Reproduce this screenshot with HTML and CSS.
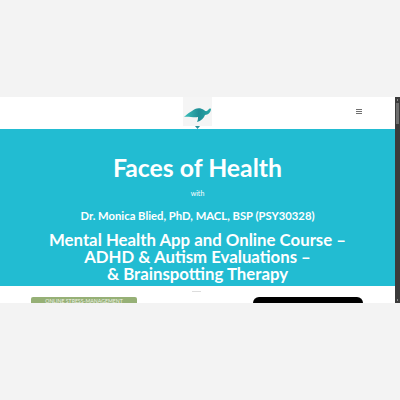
FILE: index.html
```html
<!DOCTYPE html>
<html lang="en">
  <head>
    <meta charset="UTF-8" />
    <meta name="viewport" content="width=device-width, initial-scale=1.0" />
    <title>Faces of Health</title>
    <link rel="stylesheet" href="styles.css">
  </head>
  <body>
    <div class="frame">
      <div class="page">
        <!-- logo and menu -->
        <header class="topbar">
          <div class="logo">
            <div class="logo-box">
              <svg width="29" height="29" viewBox="0 0 29 29">
                <defs>
                  <linearGradient id="shell" x1="0" y1="0" x2="1" y2="0">
                    <stop offset="0" stop-color="#3cc0bb" />
                    <stop offset="0.55" stop-color="#1f8e96" />
                    <stop offset="1" stop-color="#2aa6a6" />
                  </linearGradient>
                </defs>
                <path d="M1 20 C4 17 7 15 9 14 C12 11 17 10 21 13 C23 15 24 14 25 13 C26 12 27 11 28 12 C28 15 25 18 22 18 C21 21 18 24 14 25 C15 23 15 21 15 20 C11 21 5 19 1 20 Z" fill="url(#shell)" />
              </svg>
            </div>
            <svg class="logo-mark" width="5" height="3" viewBox="0 0 5 3">
              <path d="M0 0 L5 0 L2.5 3 Z" fill="#2f8f99" />
            </svg>
          </div>
          <button type="button" class="menu-btn" aria-label="menu">
            <span></span><span></span><span></span>
          </button>
        </header>
        <!-- teal title block -->
        <section class="hero">
          <h1>Faces of Health</h1>
          <p class="with">with</p>
          <h3>Dr. Monica Blied, PhD, MACL, BSP (PSY30328)</h3>
          <h2>Mental Health App and Online Course –<br>ADHD &amp; Autism Evaluations –<br>&amp; Brainspotting Therapy</h2>
        </section>
        <section class="below">
          <div class="green-card">ONLINE STRESS-MANAGEMENT</div>
          <div class="black-card"></div>
        </section>
      </div>
      <div class="scrollbar">
        <span class="arrow"></span>
        <div class="thumb"></div>
        <span class="arrow bottom"></span>
      </div>
    </div>
  </body>
</html>
```

FILE: styles.css
```css
html,
body {
  height: 100%;
}

body {
  margin: 0;
  background-color: #f3f3f3;
  font-family: "Lato", "Liberation Sans", sans-serif;
  padding-top: 97px;
  box-sizing: border-box;
}

.frame {
  display: flex;
  height: 206px;
  overflow: hidden;
  background-color: #fff;
}

.page {
  flex: 1;
  overflow: hidden;
}

/* top bar */
.topbar {
  height: 32px;
  display: flex;
  justify-content: center;
  position: relative;
  background-color: #fff;
}

.logo {
  width: 29px;
  display: flex;
  flex-direction: column;
  align-items: center;
}

.logo-box {
  width: 29px;
  height: 29px;
  background-color: #f5f5f5;
}

.logo-box svg {
  display: block;
}

.logo-mark {
  display: block;
}

.menu-btn {
  position: absolute;
  right: 33px;
  top: 12px;
  width: 6px;
  padding: 0;
  border: 0;
  background: none;
  display: flex;
  flex-direction: column;
  gap: 1px;
}

.menu-btn span {
  display: block;
  height: 1px;
  background-color: #707070;
}

/* title block */
.hero {
  height: 157px;
  background-color: #22bcd2;
  color: #fff;
  text-align: center;
  padding-top: 25px;
  box-sizing: border-box;
}

.hero h1 {
  margin: 0;
  font-size: 24.8px;
  line-height: 28px;
  font-weight: 700;
}

.hero .with {
  margin: 6px 0 0;
  font-size: 7px;
  line-height: 10px;
}

.hero h3 {
  margin: 11px 0 0;
  font-size: 11.25px;
  line-height: 14px;
  font-weight: 700;
}

.hero h2 {
  margin: 8px 0 0;
  font-size: 16.8px;
  line-height: 17px;
  font-weight: 700;
}

/* below the title */
.below {
  display: flex;
  height: 17px;
  margin-top: 1px;
  position: relative;
}

.below::before {
  content: "";
  position: absolute;
  left: 192px;
  top: 4px;
  width: 9px;
  height: 1px;
  background-color: #ddd;
}

.green-card {
  margin: 10px 0 0 31px;
  width: 106px;
  height: 20px;
  background-color: #96b076;
  border-radius: 2px 2px 0 0;
  color: #eef2e6;
  font-size: 5.2px;
  line-height: 9px;
  text-align: center;
}

.black-card {
  margin: 10px 0 0 116px;
  width: 110px;
  height: 20px;
  background-color: #000;
  border-radius: 6px 6px 0 0;
}

/* scrollbar */
.scrollbar {
  width: 5px;
  background-color: #3b3b3b;
  padding: 2px 1px;
  box-sizing: border-box;
  display: flex;
  flex-direction: column;
}

.arrow {
  display: block;
  height: 2px;
  margin: 0 1px;
  background-color: #8a8a8a;
}

.arrow.bottom {
  margin-top: auto;
}

.thumb {
  height: 21px;
  margin-top: 2px;
  background-color: #6e6e6e;
}
```
